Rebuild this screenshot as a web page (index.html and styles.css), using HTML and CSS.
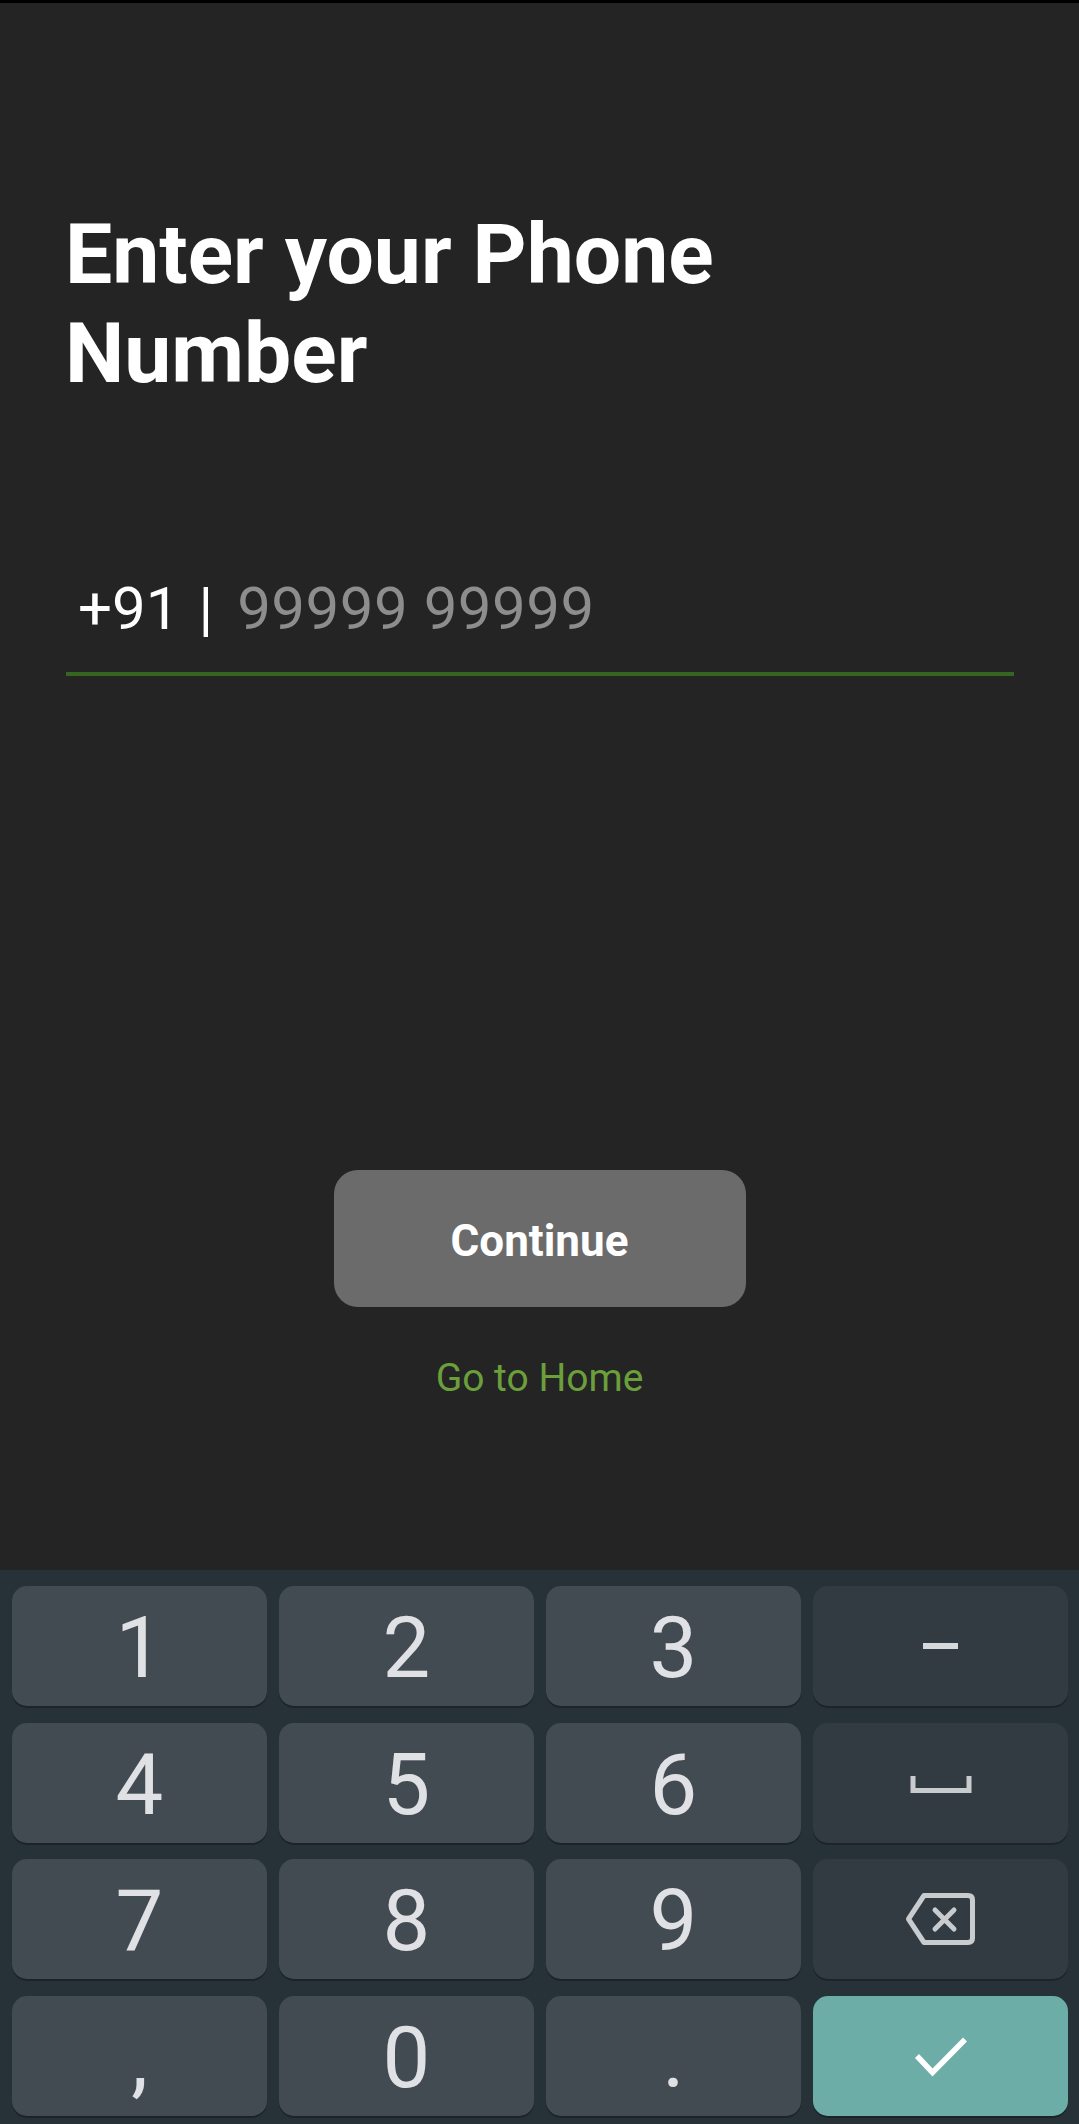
FILE: index.html
```html
<!DOCTYPE html>
<html lang="en">
<head>
<meta charset="utf-8">
<title>Enter your Phone Number</title>
<link rel="stylesheet" href="styles.css">
</head>
<body>
<div class="statusbar"></div>
<main class="screen">
  <h1 class="title">Enter your Phone<br>Number</h1>
  <div class="phone-field">
    <span class="prefix">+91</span><span class="sep">|</span><span class="placeholder">99999 99999</span>
  </div>
  <div class="actions">
    <button class="continue" type="button">Continue</button>
    <a class="home-link" href="#">Go to Home</a>
  </div>
</main>
<div class="keyboard">
  <div class="key">1</div>
  <div class="key">2</div>
  <div class="key">3</div>
  <div class="key fn"><span class="dash"></span></div>
  <div class="key">4</div>
  <div class="key">5</div>
  <div class="key">6</div>
  <div class="key fn">
    <svg class="space-icon" width="62" height="17" viewBox="0 0 62 17"><path d="M3 0 V14.5 H59 V0" fill="none" stroke="#c9ccce" stroke-width="5"/></svg>
  </div>
  <div class="key">7</div>
  <div class="key">8</div>
  <div class="key">9</div>
  <div class="key fn">
    <svg class="bksp-icon" width="72" height="58" viewBox="0 0 72 58"><path d="M3.5 29 L19 5.5 H63 Q67.5 5.5 67.5 10 V48 Q67.5 52.5 63 52.5 H19 Z" fill="none" stroke="#c9ccce" stroke-width="5" stroke-linejoin="round"/><path d="M30 20 L49 39 M49 20 L30 39" stroke="#c9ccce" stroke-width="5" stroke-linecap="round"/></svg>
  </div>
  <div class="key">,</div>
  <div class="key">0</div>
  <div class="key">.</div>
  <div class="key done">
    <svg class="check-icon" width="54" height="42" viewBox="0 0 54 42"><path d="M3 21 L18.5 37.5 L51 4.5" fill="none" stroke="#ffffff" stroke-width="5.5"/></svg>
  </div>
</div>
</body>
</html>
```

FILE: styles.css
```css
html, body {
  margin: 0;
  padding: 0;
}
body {
  width: 1079px;
  height: 2124px;
  background: #242424;
  display: flex;
  flex-direction: column;
  overflow: hidden;
  font-family: Roboto, "Noto Sans", sans-serif;
}
.statusbar {
  height: 3px;
  background: #000;
  flex: none;
}
.screen {
  flex: 1;
  display: flex;
  flex-direction: column;
}
.title {
  margin: 202px 0 0 65px;
  font-size: 84px;
  line-height: 99px;
  font-weight: 700;
  color: #ffffff;
  letter-spacing: 0;
}
.phone-field {
  margin: 166px 0 0 66px;
  width: 948px;
  display: flex;
  align-items: baseline;
  font-size: 60px;
  line-height: 80px;
  padding: 0 0 23px 12px;
  box-sizing: border-box;
  border-bottom: 4px solid #356520;
}
.prefix {
  color: #ffffff;
}
.sep {
  color: #ffffff;
  margin-left: 19px;
}
.placeholder {
  color: #8d8d8d;
  margin-left: 24px;
  letter-spacing: 0.5px;
}
.actions {
  display: flex;
  flex-direction: column;
  align-items: center;
  margin-top: 494px;
}
.continue {
  width: 412px;
  height: 137px;
  border: none;
  border-radius: 24px;
  background: #6b6b6b;
  color: #ffffff;
  font-family: Roboto, "Noto Sans", sans-serif;
  font-weight: 700;
  font-size: 44px;
  padding: 4px 0 0;
  box-sizing: border-box;
  display: flex;
  align-items: center;
  justify-content: center;
}
.home-link {
  margin-top: 48px;
  font-size: 39px;
  line-height: 46px;
  color: #6a9f3c;
  text-decoration: none;
}
.keyboard {
  flex: none;
  height: 554px;
  box-sizing: border-box;
  background: #263238;
  padding: 16px 11px 0 12px;
  display: grid;
  grid-template-columns: repeat(4, 1fr);
  grid-template-rows: repeat(4, 120px);
  column-gap: 12px;
  row-gap: 16.5px;
}
.key {
  background: #424a52;
  border-radius: 15px;
  box-shadow: 0 2px 0 #1d2428;
  display: flex;
  align-items: center;
  justify-content: center;
  color: #dfe1e4;
  font-size: 85px;
  line-height: 85px;
  padding-top: 5px;
  box-sizing: border-box;
}
.key.fn {
  background: #323b42;
  padding-top: 0;
}
.key.done {
  background: #6dada7;
  padding-top: 0;
}
.dash {
  width: 35px;
  height: 6px;
  background: #d6d9dc;
}
.space-icon {
  margin-top: 4px;
}
.check-icon {
  display: block;
}
```
